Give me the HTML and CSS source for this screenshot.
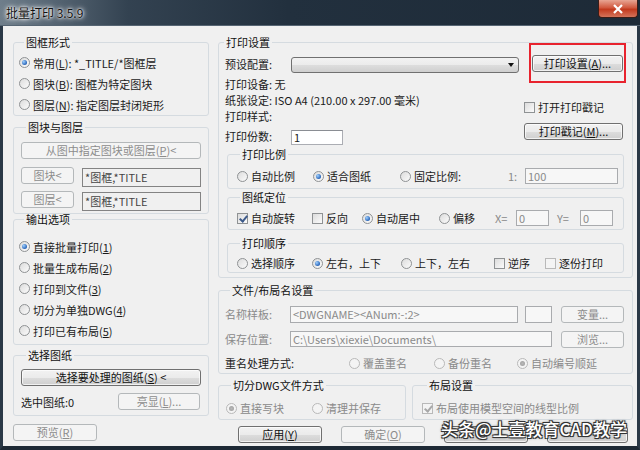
FILE: index.html
```html
<!DOCTYPE html>
<html lang="zh-CN">
<head>
    <meta charset="UTF-8">
    <title>批量打印 3.5.9</title>
    <link rel="stylesheet" href="styles.css">
</head>
<body>
    <div class="window">
        <div class="titlebar">
            <span class="title">批量打印 3.5.9</span>
            <div class="close">
                <svg width="12" height="10" viewBox="0 0 12 10"><path d="M2 1 L10 9 M10 1 L2 9" stroke="#fff" stroke-width="2.2"/></svg>
            </div>
        </div>

        <div class="content">
            <!-- left column -->
            <div class="col-left">
                <fieldset class="group g-frame">
                    <legend>图框形式</legend>
                    <label class="opt"><span class="radio on"></span>常用(<u>L</u>): *_TITLE/*图框层</label>
                    <label class="opt"><span class="radio"></span>图块(<u>B</u>): 图框为特定图块</label>
                    <label class="opt"><span class="radio"></span>图层(<u>N</u>): 指定图层封闭矩形</label>
                </fieldset>

                <fieldset class="group g-block">
                    <legend>图块与图层</legend>
                    <button class="btn off wide" disabled>从图中指定图块或图层(<u>P</u>)&lt;</button>
                    <div class="pick-row">
                        <button class="btn off pick" disabled>图块&lt;</button>
                        <div class="field ro">*图框,*TITLE</div>
                    </div>
                    <div class="pick-row second">
                        <button class="btn off pick" disabled>图层&lt;</button>
                        <div class="field ro">*图框,*TITLE</div>
                    </div>
                </fieldset>

                <fieldset class="group g-output">
                    <legend>输出选项</legend>
                    <label class="opt"><span class="radio on"></span>直接批量打印(<u>1</u>)</label>
                    <label class="opt"><span class="radio"></span>批量生成布局(<u>2</u>)</label>
                    <label class="opt"><span class="radio"></span>打印到文件(<u>3</u>)</label>
                    <label class="opt"><span class="radio"></span>切分为单独DWG(<u>4</u>)</label>
                    <label class="opt"><span class="radio"></span>打印已有布局(<u>5</u>)</label>
                </fieldset>

                <fieldset class="group g-sheets">
                    <legend>选择图纸</legend>
                    <button class="btn wide">选择要处理的图纸(<u>S</u>) &lt;</button>
                    <div class="sheet-row">
                        <span>选中图纸:0</span>
                        <button class="btn off light" disabled>亮显(<u>L</u>)...</button>
                    </div>
                </fieldset>

                <div class="left-bottom">
                    <button class="btn off bottom" disabled>预览(<u>R</u>)</button>
                </div>
            </div>

            <!-- right column -->
            <div class="col-right">
                <fieldset class="group g-print">
                    <legend>打印设置</legend>
                    <div class="print-top">
                        <div class="print-info">
                            <div class="line preset">
                                <span class="lbl">预设配置:</span>
                                <div class="combo"><span class="arrow"></span></div>
                            </div>
                            <div class="line info first">打印设备: 无</div>
                            <div class="line info">纸张设定: ISO A4 (210.00 x 297.00 毫米)</div>
                            <div class="line info">打印样式:</div>
                            <div class="line copies">
                                <span class="lbl">打印份数:</span>
                                <div class="field copies-in">1</div>
                            </div>
                        </div>
                        <div class="print-side">
                            <div class="marked">
                                <button class="btn setup">打印设置(<u>A</u>)...</button>
                            </div>
                            <label class="opt stamp"><span class="check"></span>打开打印戳记</label>
                            <button class="btn stamp-btn">打印戳记(<u>M</u>)...</button>
                        </div>
                    </div>

                    <div class="subgroups">
                        <fieldset class="group sub g-scale">
                            <legend>打印比例</legend>
                            <div class="sub-row">
                                <label class="opt w76"><span class="radio"></span>自动比例</label>
                                <label class="opt w87"><span class="radio on"></span>适合图纸</label>
                                <label class="opt"><span class="radio"></span>固定比例:</label>
                                <span class="spacer"></span>
                                <span class="dim ratio">1:</span>
                                <div class="field dis ratio-in">100</div>
                            </div>
                        </fieldset>

                        <fieldset class="group sub g-place">
                            <legend>图纸定位</legend>
                            <div class="sub-row">
                                <label class="opt w75"><span class="check on"></span>自动旋转</label>
                                <label class="opt w50"><span class="check"></span>反向</label>
                                <label class="opt w77"><span class="radio on"></span>自动居中</label>
                                <label class="opt w56"><span class="radio"></span>偏移</label>
                                <span class="dim xy">X=</span>
                                <div class="field dis off-in">0</div>
                                <span class="dim xy y">Y=</span>
                                <div class="field dis off-in">0</div>
                            </div>
                        </fieldset>

                        <fieldset class="group sub g-order">
                            <legend>打印顺序</legend>
                            <div class="sub-row">
                                <label class="opt w75"><span class="radio"></span>选择顺序</label>
                                <label class="opt w89"><span class="radio on"></span>左右，上下</label>
                                <label class="opt w93"><span class="radio"></span>上下，左右</label>
                                <label class="opt w51"><span class="check"></span>逆序</label>
                                <label class="opt"><span class="check dis"></span>逐份打印</label>
                            </div>
                        </fieldset>
                    </div>
                </fieldset>

                <fieldset class="group g-file">
                    <legend>文件/布局名设置</legend>
                    <div class="file-row">
                        <span class="lbl dim">名称样板:</span>
                        <div class="field dis name-in">&lt;DWGNAME&gt;&lt;ANum:-:2&gt;</div>
                        <div class="field dis tiny"></div>
                        <button class="btn off var" disabled>变量...</button>
                    </div>
                    <div class="file-row second">
                        <span class="lbl dim">保存位置:</span>
                        <div class="field dis path-in">C:\Users\xiexie\Documents\</div>
                        <button class="btn off var" disabled>浏览...</button>
                    </div>
                    <div class="file-row third">
                        <span class="lbl dup">重名处理方式:</span>
                        <label class="opt dim w85"><span class="radio dis"></span>覆盖重名</label>
                        <label class="opt dim w83"><span class="radio dis"></span>备份重名</label>
                        <label class="opt dim"><span class="radio dis on"></span>自动编号顺延</label>
                    </div>
                </fieldset>

                <div class="pair">
                    <fieldset class="group g-split">
                        <legend>切分DWG文件方式</legend>
                        <div class="sub-row">
                            <label class="opt dim w86"><span class="radio dis on"></span>直接写块</label>
                            <label class="opt dim"><span class="radio dis"></span>清理并保存</label>
                        </div>
                    </fieldset>
                    <fieldset class="group g-layout">
                        <legend>布局设置</legend>
                        <div class="sub-row">
                            <label class="opt dim"><span class="check dis on"></span>布局使用模型空间的线型比例</label>
                        </div>
                    </fieldset>
                </div>

                <div class="actions">
                    <button class="btn bottom">应用(<u>Y</u>)</button>
                    <button class="btn off bottom" disabled>确定(<u>O</u>)</button>
                    <!-- these two sit under the watermark, their labels can't be seen -->
                    <button class="btn bottom"></button>
                    <button class="btn bottom last"></button>
                </div>
            </div>
        </div>

        <div class="watermark">头条@士壹教育CAD教学</div>
    </div>
</body>
</html>
```

FILE: styles.css
```css
html, body {
    margin: 0;
    padding: 0;
}

body {
    width: 640px;
    height: 450px;
    overflow: hidden;
    font-family: "Noto Sans CJK SC", "Noto Sans", sans-serif;
    font-size: 11px;
    color: #1a1a1a;
}

u {
    text-decoration: underline;
    text-underline-offset: 1px;
}

.window {
    position: relative; /* for the overlays */
    width: 640px;
    height: 450px;
    box-sizing: border-box;
    background: #23313f;
    border-left: 3px solid #2a3846;
    border-right: 3px solid #2a3846;
    border-bottom: 4px solid #1d2935;
}

/* title bar */
.titlebar {
    height: 26px;
    display: flex;
    align-items: center;
    justify-content: space-between;
    margin-left: -3px;
    margin-right: -3px;
    background: linear-gradient(to right, #6f7e8b 0%, #44556590 20%, #22303e 45%, #1d2a37 100%), #1d2a37;
    border-bottom: 1px solid #566573;
    box-sizing: border-box;
}

.title {
    padding-left: 6px;
    font-size: 12px;
    color: #111;
    text-shadow: 0 0 6px #fff, 0 0 4px #fff, 0 0 2px #fff;
}

.close {
    align-self: flex-start;
    width: 40px;
    height: 18px;
    margin-right: 2px;
    display: flex;
    align-items: center;
    justify-content: center;
    background: linear-gradient(to bottom, #e8a593 0%, #d1593f 45%, #c23a1e 55%, #d4735a 100%);
    border: 1px solid #3b1d17;
    border-top: none;
    border-radius: 0 0 4px 4px;
    box-sizing: border-box;
}

/* dialog body */
.content {
    height: 420px;
    box-sizing: border-box;
    background: #f0f0f0;
    padding: 9px 4px 0 10px;
    display: flex;
    gap: 9px;
}

.col-left {
    width: 196px;
    display: flex;
    flex-direction: column;
}

.col-right {
    width: 415px;
    display: flex;
    flex-direction: column;
}

/* group boxes */
.group {
    margin: 0;
    padding: 0;
    min-width: 0;
    border: 1px solid #d5dbe0;
    border-radius: 3px;
}

.group legend {
    margin-left: 5px;
    padding: 0 2px;
    line-height: 14px;
    font-size: 11px;
    color: #111;
}

.g-frame {
    padding: 3px 0 0 5px;
}

.g-block {
    margin-top: 4px;
    padding: 8px 0 2px 7px;
}

.g-output {
    margin-top: -2px;
    padding: 10px 0 3px 5px;
}

.g-sheets {
    margin-top: 3px;
    padding: 7px 0 5px 7px;
}

/* options */
.opt {
    display: flex;
    align-items: center;
    height: 21px;
    white-space: nowrap;
}

.sub-row .opt,
.file-row .opt,
.stamp {
    height: 18px;
}

.radio,
.check {
    flex: none;
    width: 11px;
    height: 11px;
    margin-right: 3px;
    box-sizing: border-box;
    border: 1px solid #8f9294;
    background: linear-gradient(135deg, #dcdcdc, #fbfbfb);
    position: relative;
}

.radio {
    border-radius: 50%;
}

.radio.on::after {
    content: "";
    position: absolute;
    left: 2px;
    top: 2px;
    width: 5px;
    height: 5px;
    border-radius: 50%;
    background: radial-gradient(circle at 35% 35%, #9fd0ff, #2864b8 70%);
}

.check.on::after {
    content: "";
    position: absolute;
    left: 3px;
    top: 0;
    width: 3px;
    height: 6px;
    border: solid #3d5a8a;
    border-width: 0 2px 2px 0;
    transform: rotate(40deg);
}

.radio.dis,
.check.dis {
    border-color: #b9b9b9;
    background: #f4f4f4;
}

.radio.dis.on::after {
    background: radial-gradient(circle, #b8b8b8, #9c9c9c);
}

.check.dis.on::after {
    border-color: #a8a8a8;
}

.dim {
    color: #8a8a8a;
}

/* buttons */
.btn {
    font-family: inherit;
    font-size: 11px;
    height: 17px;
    padding: 0;
    line-height: 15px;
    color: #111;
    border: 1px solid #707070;
    border-radius: 3px;
    background: linear-gradient(to bottom, #f2f2f2 0%, #ebebeb 50%, #dddddd 51%, #cfcfcf 100%);
    box-shadow: inset 0 0 0 1px rgba(255, 255, 255, 0.7);
    box-sizing: border-box;
    white-space: nowrap;
}

.btn.off {
    color: #8c8c8c;
    border-color: #b4b8ba;
    background: #f4f4f4;
    box-shadow: none;
}

.wide {
    display: block;
    width: 180px;
}

.pick-row {
    display: flex;
    align-items: flex-start;
    margin-top: 8px;
    gap: 8px;
}

.pick-row.second {
    margin-top: 4px;
}

.pick {
    width: 53px;
}

.field {
    height: 17px;
    box-sizing: border-box;
    border: 1px solid #abadb3;
    border-top-color: #8a8d93;
    background: #fff;
    line-height: 15px;
    padding-left: 2px;
    white-space: nowrap;
    overflow: hidden;
}

.field.ro {
    width: 119px;
    height: 19px;
    margin-top: 1px;
    border-color: #838383;
    background: #f0f0f0;
    color: #444;
    line-height: 17px;
}

.field.dis {
    color: #8a8a8a;
    border-color: #a9abae;
    background: #f7f7f7;
}

.sheet-row {
    display: flex;
    align-items: center;
    justify-content: space-between;
    margin-top: 7px;
    padding-right: 8px;
    height: 17px;
}

.light {
    width: 82px;
}

.left-bottom {
    margin-top: 8px;
}

.bottom {
    width: 84px;
}

.bottom.last {
    width: 81px;
}

/* print settings */
.print-top {
    display: grid;
    grid-template-columns: 294px 100px;
    gap: 5px;
    padding: 6px 8px 0 6px;
}

.line {
    display: flex;
    align-items: center;
    white-space: nowrap;
}

.preset {
    height: 18px;
}

.lbl {
    width: 66px;
    flex: none;
}

.combo {
    position: relative;
    width: 228px;
    height: 16px;
    margin-top: 2px;
    box-sizing: border-box;
    border: 1px solid #707070;
    border-radius: 3px;
    background: linear-gradient(to bottom, #f2f2f2 0%, #ebebeb 50%, #dddddd 51%, #cfcfcf 100%);
}

.arrow {
    position: absolute;
    right: 4px;
    top: 5px;
    border-left: 3px solid transparent;
    border-right: 3px solid transparent;
    border-top: 4px solid #111;
}

.info {
    height: 16px;
    line-height: 16px;
}

.info.first {
    margin-top: 3px;
}

.copies {
    height: 18px;
    margin-top: 3px;
}

.copies-in {
    width: 52px;
    height: 15px;
    margin-top: 2px;
    line-height: 13px;
}

.print-side {
    display: flex;
    flex-direction: column;
}

.marked {
    position: relative; /* for the red annotation box */
    padding-left: 8px;
}

.marked::after {
    content: "";
    position: absolute;
    left: 5px;
    top: -12px;
    width: 97px;
    height: 40px;
    box-sizing: border-box;
    border: 2px solid #e8232e;
    pointer-events: none;
}

.setup {
    width: 91px;
}

.stamp {
    margin-top: 26px;
}

.stamp-btn {
    width: 99px;
    margin-top: 7px;
}

.subgroups {
    padding: 0 8px 4px 8px;
}

.sub legend {
    margin-left: 3px;
}

.sub-row {
    display: flex;
    align-items: center;
    height: 18px;
    white-space: nowrap;
}

.g-scale {
    margin-top: 2px;
    padding: 6px 5px 3px 9px;
}

.g-place {
    margin-top: 1px;
    padding: 5px 5px 2px 9px;
}

.g-order {
    margin-top: 6px;
    padding: 4px 5px 0 9px;
}

.w50 { width: 50px; }
.w51 { width: 51px; }
.w56 { width: 56px; }
.w75 { width: 75px; }
.w76 { width: 76px; }
.w77 { width: 77px; }
.w83 { width: 83px; }
.w85 { width: 85px; }
.w86 { width: 86px; }
.w87 { width: 87px; }
.w89 { width: 89px; }
.w93 { width: 93px; }

.spacer {
    flex: 1;
}

.ratio {
    width: 17px;
}

.ratio-in {
    width: 93px;
    height: 16px;
    line-height: 14px;
}

.xy {
    width: 21px;
}

.xy.y {
    margin-left: 8px;
    width: 23px;
}

.off-in {
    width: 33px;
    height: 16px;
    line-height: 14px;
}

/* file / layout names */
.g-file {
    margin-top: 5px;
    padding: 8px 8px 1px 6px;
}

.file-row {
    display: flex;
    align-items: center;
    height: 18px;
    white-space: nowrap;
}

.file-row.second {
    margin-top: 7px;
}

.file-row.third {
    margin-top: 6px;
}

.file-row .lbl {
    width: 65px;
}

.file-row .dup {
    width: 124px;
}

.name-in {
    width: 228px;
}

.tiny {
    width: 27px;
    margin-left: 7px;
    background: #f0f0f0;
}

.var {
    width: 63px;
    margin-left: 9px;
}

.path-in {
    width: 262px;
    height: 16px;
    line-height: 14px;
}

.pair {
    display: flex;
    gap: 6px;
    margin-top: 4px;
}

.g-split {
    width: 188px;
    box-sizing: border-box;
    padding: 7px 0 2px 7px;
}

.g-layout {
    flex: 1;
    padding: 7px 0 2px 9px;
}

.actions {
    display: flex;
    gap: 19px;
    margin-top: 6px;
    padding-left: 20px;
}

/* screenshot watermark */
.watermark {
    position: absolute;
    left: 438px;
    top: 416px;
    font-size: 17px;
    font-weight: 500;
    color: #fff;
    white-space: nowrap;
    text-shadow: 1px 1px 0 #333, -1px -1px 0 #333, 1px -1px 0 #333, -1px 1px 0 #333, 0 0 3px #000;
}
```
